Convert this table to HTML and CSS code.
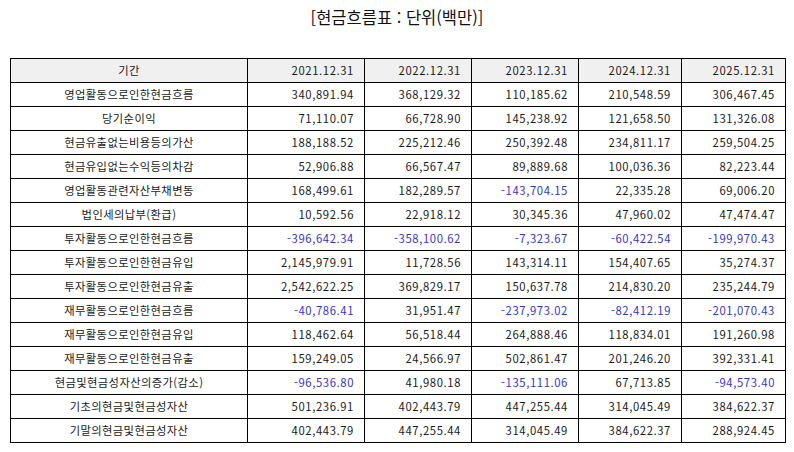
FILE: index.html
```html
<!DOCTYPE html>
<html lang="ko">
<head>
<meta charset="utf-8">
<title>현금흐름표</title>
<link rel="stylesheet" href="styles.css">
</head>
<body>
<div class="page">
  <h1 class="title">[현금흐름표 : 단위(백만)]</h1>
  <table class="cf">
    <colgroup>
      <col class="c-label"><col class="c1"><col class="c2"><col class="c3"><col class="c4"><col class="c5">
    </colgroup>
    <thead>
      <tr><th class="label">기간</th><th>2021.12.31</th><th>2022.12.31</th><th>2023.12.31</th><th>2024.12.31</th><th>2025.12.31</th></tr>
    </thead>
    <tbody>
      <tr><td class="label">영업활동으로인한현금흐름</td><td>340,891.94</td><td>368,129.32</td><td>110,185.62</td><td>210,548.59</td><td>306,467.45</td></tr>
      <tr><td class="label">당기순이익</td><td>71,110.07</td><td>66,728.90</td><td>145,238.92</td><td>121,658.50</td><td>131,326.08</td></tr>
      <tr><td class="label">현금유출없는비용등의가산</td><td>188,188.52</td><td>225,212.46</td><td>250,392.48</td><td>234,811.17</td><td>259,504.25</td></tr>
      <tr><td class="label">현금유입없는수익등의차감</td><td>52,906.88</td><td>66,567.47</td><td>89,889.68</td><td>100,036.36</td><td>82,223.44</td></tr>
      <tr><td class="label">영업활동관련자산부채변동</td><td>168,499.61</td><td>182,289.57</td><td class="neg">-143,704.15</td><td>22,335.28</td><td>69,006.20</td></tr>
      <tr><td class="label">법인세의납부(환급)</td><td>10,592.56</td><td>22,918.12</td><td>30,345.36</td><td>47,960.02</td><td>47,474.47</td></tr>
      <tr><td class="label">투자활동으로인한현금흐름</td><td class="neg">-396,642.34</td><td class="neg">-358,100.62</td><td class="neg">-7,323.67</td><td class="neg">-60,422.54</td><td class="neg">-199,970.43</td></tr>
      <tr><td class="label">투자활동으로인한현금유입</td><td>2,145,979.91</td><td>11,728.56</td><td>143,314.11</td><td>154,407.65</td><td>35,274.37</td></tr>
      <tr><td class="label">투자활동으로인한현금유출</td><td>2,542,622.25</td><td>369,829.17</td><td>150,637.78</td><td>214,830.20</td><td>235,244.79</td></tr>
      <tr><td class="label">재무활동으로인한현금흐름</td><td class="neg">-40,786.41</td><td>31,951.47</td><td class="neg">-237,973.02</td><td class="neg">-82,412.19</td><td class="neg">-201,070.43</td></tr>
      <tr><td class="label">재무활동으로인한현금유입</td><td>118,462.64</td><td>56,518.44</td><td>264,888.46</td><td>118,834.01</td><td>191,260.98</td></tr>
      <tr><td class="label">재무활동으로인한현금유출</td><td>159,249.05</td><td>24,566.97</td><td>502,861.47</td><td>201,246.20</td><td>392,331.41</td></tr>
      <tr><td class="label">현금및현금성자산의증가(감소)</td><td class="neg">-96,536.80</td><td>41,980.18</td><td class="neg">-135,111.06</td><td>67,713.85</td><td class="neg">-94,573.40</td></tr>
      <tr><td class="label">기초의현금및현금성자산</td><td>501,236.91</td><td>402,443.79</td><td>447,255.44</td><td>314,045.49</td><td>384,622.37</td></tr>
      <tr><td class="label">기말의현금및현금성자산</td><td>402,443.79</td><td>447,255.44</td><td>314,045.49</td><td>384,622.37</td><td>288,924.45</td></tr>
    </tbody>
  </table>
</div>
</body>
</html>
```
FILE: styles.css
```css
html, body {
  margin: 0;
  padding: 0;
  background: #ffffff;
}
body {
  font-family: "Noto Sans CJK KR", "Noto Sans", sans-serif;
  color: #1a1a1a;
}
.page {
  width: 794px;
  height: 452px;
  padding-top: 5px;
  box-sizing: border-box;
}
.title {
  margin: 0;
  height: 24px;
  line-height: 24px;
  font-size: 16.5px;
  font-weight: 400;
  text-align: center;
  color: #111;
}
.cf {
  margin: 29px 0 0 10px;
  width: 775px;
  border-collapse: collapse;
  table-layout: fixed;
  font-size: 11.3px;
}
.c-label { width: 237px; }
.c1 { width: 117px; }
.c2 { width: 107px; }
.c3 { width: 107px; }
.c4 { width: 103px; }
.c5 { width: 104px; }
.cf th, .cf td {
  border: 1px solid #000;
  height: 23px;
  padding: 0 10px 0 4px;
  text-align: right;
  font-weight: 400;
  white-space: nowrap;
  line-height: 23px;
  letter-spacing: 0.6px;
}
.cf th {
  background: #f0f0f0;
}
.cf .label {
  text-align: center;
  padding: 0 4px;
  letter-spacing: 0.4px;
}
.cf .neg {
  color: #3535c8;
}
```
